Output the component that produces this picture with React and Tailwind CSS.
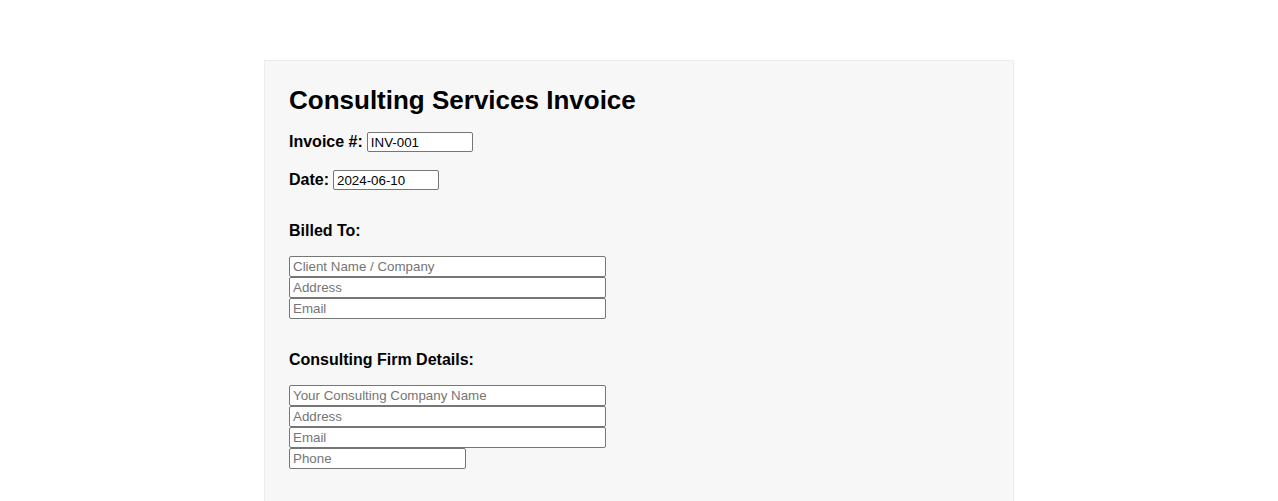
export default function App() {
  const inputBase =
    "block border border-[#767676] rounded-[2px] bg-white px-[3px] py-[2px] text-[13.333px] leading-[15px] text-black placeholder:text-[#757575] outline-none";
  const smallInput =
    "w-[106px] border border-[#767676] rounded-[2px] bg-white px-[3px] py-[1.5px] text-[13.333px] leading-[15px] font-normal text-black outline-none";
  return (
    <div className="min-h-screen bg-white pt-[60px]" style={{ fontFamily: '"Liberation Sans", Arial, sans-serif' }}>
      <div className="mx-auto w-[750px] min-h-[460px] bg-[#f7f7f7] border border-[#ececec] px-[24px] pt-[24px] pb-[24px]">
        <h1 className="text-[26px] font-bold leading-[30px] text-black mb-[17px]">Consulting Services Invoice</h1>
        <div className="mb-[18px] flex items-baseline text-[16px] leading-[18px] font-bold text-black">
          <label>Invoice #:</label>
          <input className={`ml-[4px] ${smallInput}`} defaultValue="INV-001" />
        </div>
        <div className="mb-[16px] flex items-baseline text-[16px] leading-[18px] font-bold text-black">
          <label>Date:</label>
          <input className={`ml-[4px] ${smallInput}`} defaultValue="2024-06-10" />
        </div>
        <h3 className="mt-[32px] mb-[16px] text-[16px] font-bold leading-[18px] text-black">Billed To:</h3>
        <div className="flex flex-col">
          <input className={`${inputBase} w-[317px]`} placeholder="Client Name / Company" />
          <input className={`${inputBase} w-[317px]`} placeholder="Address" />
          <input className={`${inputBase} w-[317px]`} placeholder="Email" />
        </div>
        <h3 className="mt-[32px] mb-[16px] text-[16px] font-bold leading-[18px] text-black">Consulting Firm Details:</h3>
        <div className="flex flex-col">
          <input className={`${inputBase} w-[317px]`} placeholder="Your Consulting Company Name" />
          <input className={`${inputBase} w-[317px]`} placeholder="Address" />
          <input className={`${inputBase} w-[317px]`} placeholder="Email" />
          <input className={`${inputBase} w-[177px]`} placeholder="Phone" />
        </div>
      </div>
    </div>
  );
}
